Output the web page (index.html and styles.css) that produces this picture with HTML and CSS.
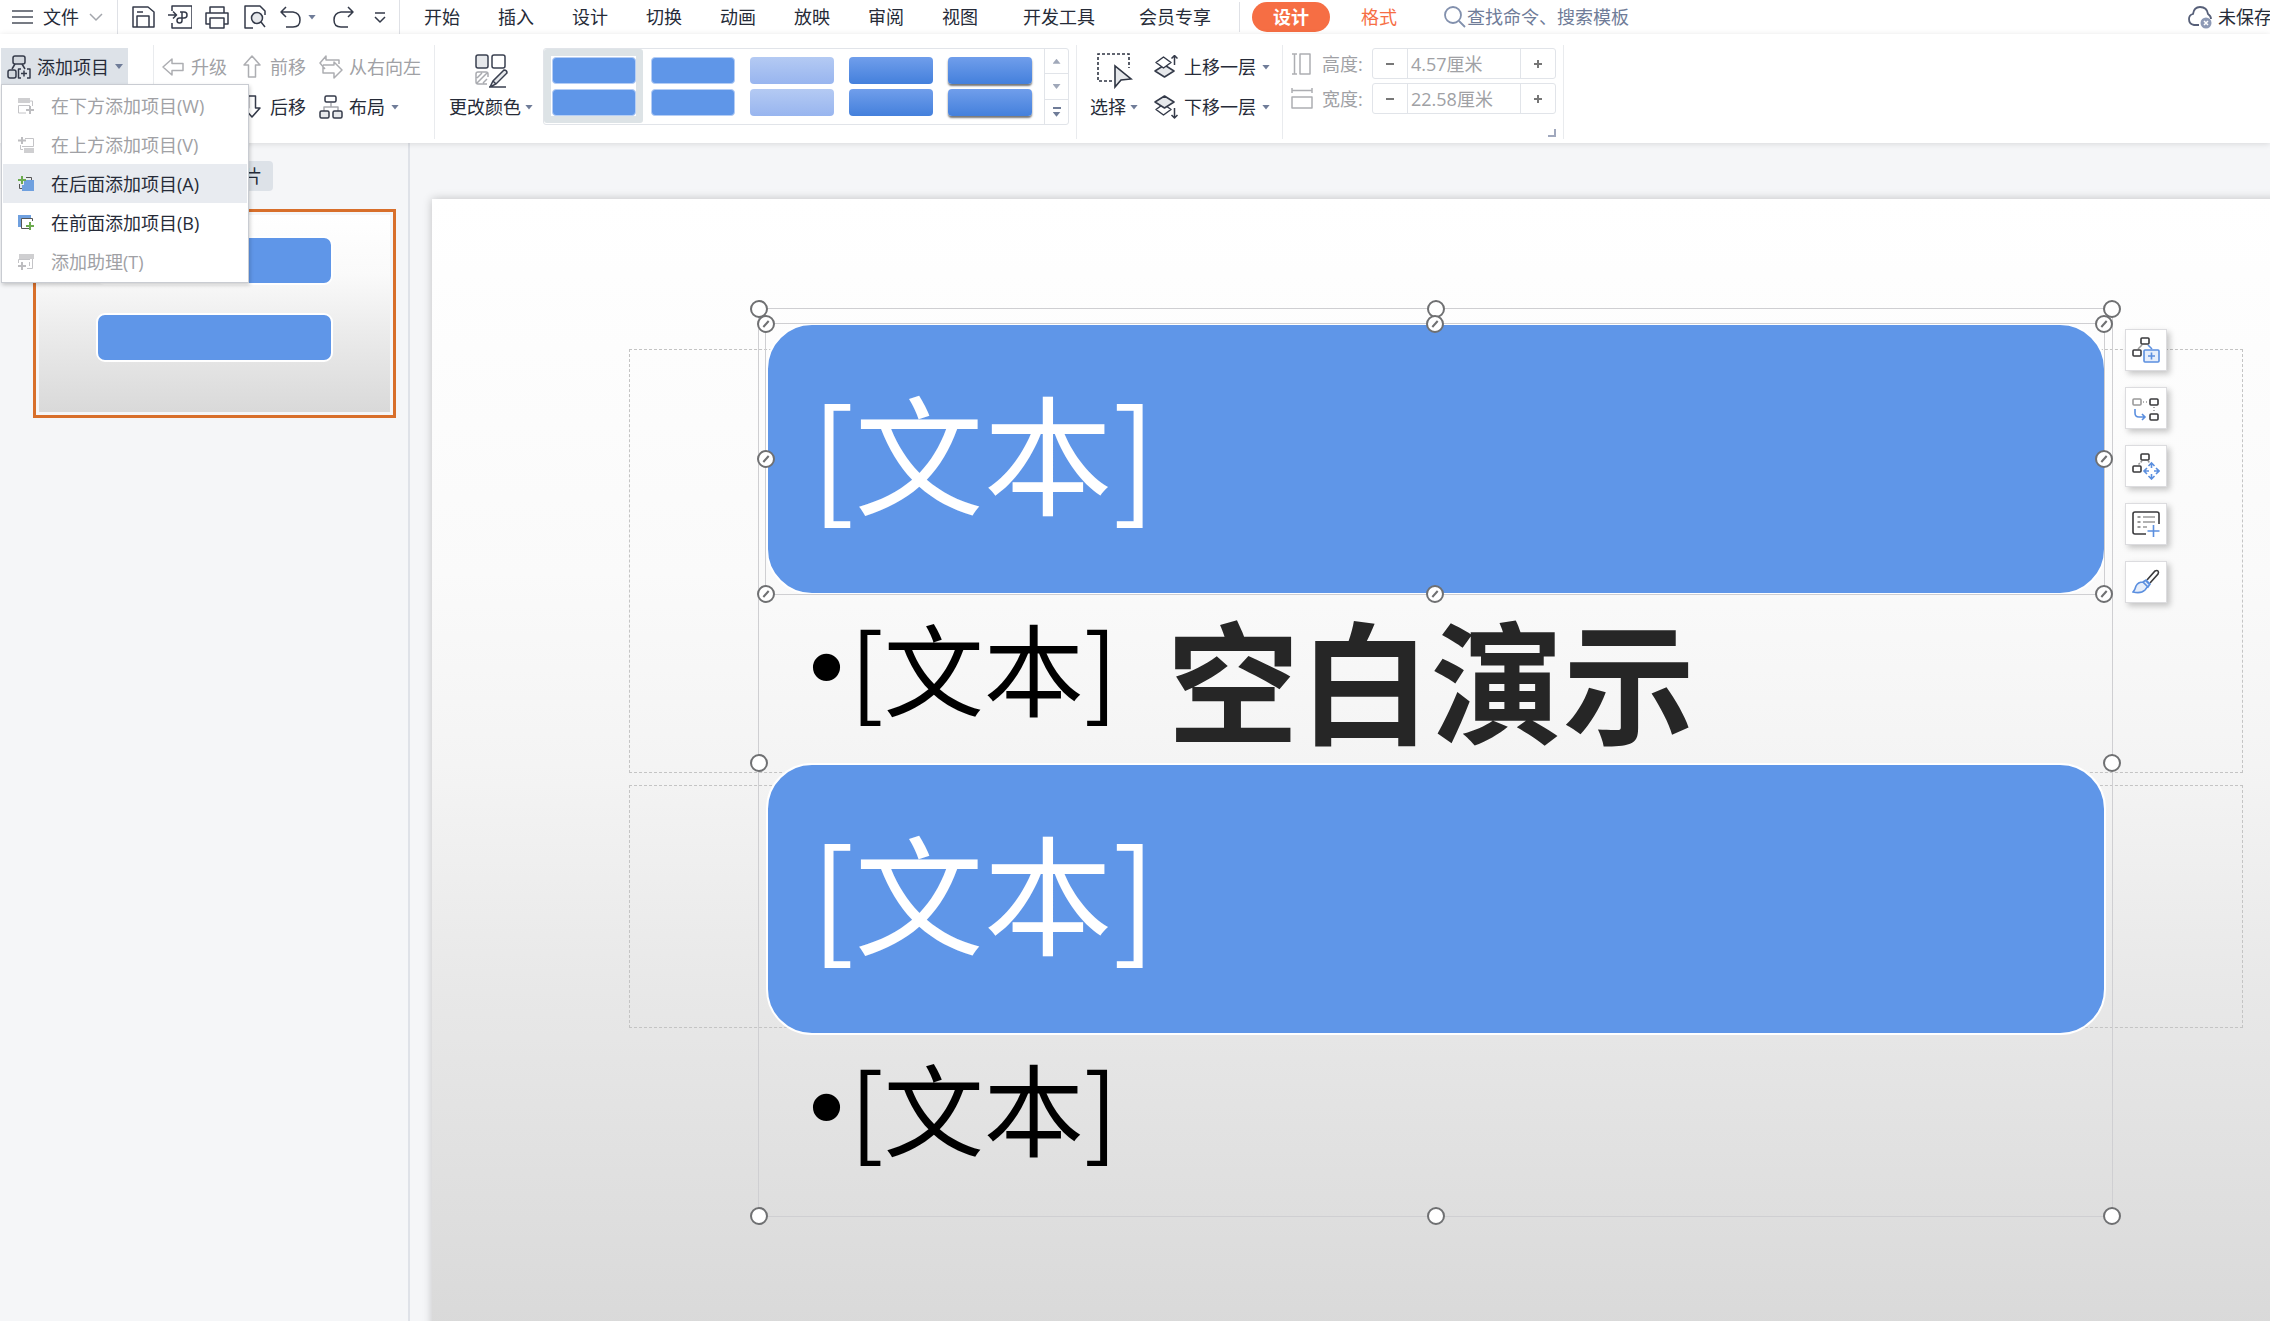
FILE: index.html
```html
<!DOCTYPE html>
<html lang="zh-CN">
<head>
<meta charset="utf-8">
<meta name="viewport" content="width=device-width, initial-scale=1">
<title>演示文稿</title>
<link rel="stylesheet" href="styles.css">
</head>
<body>
<header class="topbar">
  <button class="file-button" type="button">
    <svg class="menu-lines" width="22" height="16" viewBox="0 0 22 16"><path d="M0 2H21M0 8H21M0 14H21" stroke="#4b505c" stroke-width="1.5"/></svg>
    <span>文件</span>
    <svg width="16" height="10" viewBox="0 0 16 10"><path d="M2 2L8 8L14 2" fill="none" stroke="#a3a6ac" stroke-width="1.5"/></svg>
  </button>
  <div class="quick">
    <button type="button" aria-label="保存"><svg class="icon" viewBox="0 0 24 24"><path d="M2 2H17L23 7V22H2ZM6 22V11H18V22M6 7H12"/></svg></button>
    <button type="button" aria-label="输出为PDF"><svg class="icon" viewBox="0 0 24 24"><path d="M4 6V1H24V23H4V18M0 10H8M5 6.500L8.500 10L5 13.500M12 7H16Q19 7 19 10Q19 13 16 13H11.500Q9 13 9 15.500Q9 18 11.500 18Q14 18 14 15.500V7"/></svg></button>
    <button type="button" aria-label="打印"><svg class="icon" viewBox="0 0 24 24"><path d="M5 8V2H19V8M5 19H1V8H23V19H19M5 13H19V23H5Z"/></svg></button>
    <button type="button" aria-label="打印预览"><svg class="icon" viewBox="0 0 24 24"><path d="M11 23H3V1H18L23 6V10"/><circle cx="15" cy="13" r="5.500" fill="#e6e8eb"/><path d="M19 17L23 22"/></svg></button>
    <button type="button" aria-label="撤销"><svg class="icon" viewBox="0 0 24 24"><path d="M7 2L2 7L7 12M2 7H14Q21 8 21 15Q21 22 14 22H7"/></svg></button>
    <button class="narrow" type="button" aria-label="撤销列表"><i class="caret"></i></button>
    <button type="button" aria-label="恢复"><svg class="icon" viewBox="0 0 24 24"><path d="M17 2L22 7L17 12M22 7H10Q3 8 3 15Q3 22 10 22H17"/></svg></button>
    <button type="button" aria-label="更多"><svg class="icon" viewBox="0 0 24 24"><path d="M7 8H17M7 12L12 17L17 12"/></svg></button>
  </div>
  <nav class="tabs">
    <a href="#">开始</a><a href="#">插入</a><a href="#">设计</a><a href="#">切换</a><a href="#">动画</a><a href="#">放映</a><a href="#">审阅</a><a href="#">视图</a><a class="long first" href="#">开发工具</a><a class="long" href="#">会员专享</a>
  </nav>
  <nav class="context-tabs">
    <a class="pill" href="#">设计</a><a class="accent" href="#">格式</a>
  </nav>
  <label class="search">
    <svg width="24" height="24" viewBox="0 0 24 24"><path d="M16 16L22 22" stroke="#8290ad" stroke-width="1.800"/><circle cx="10" cy="10" r="8" fill="none" stroke="#8290ad" stroke-width="1.800"/></svg>
    <input type="text" aria-label="查找命令" placeholder="查找命令、搜索模板">
  </label>
  <button class="save-state" type="button">
    <svg width="26" height="26" viewBox="0 0 26 26"><path d="M12 21H7Q2 20 2 15Q2 11 6 10Q7 3 13 3Q20 3 21 10Q24 12 24 15" fill="none" stroke="#565f78" stroke-width="1.800"/><circle cx="19" cy="19" r="5.500" fill="#8d99b5"/><path d="M17 17L21 21M21 17L17 21" stroke="#fff" stroke-width="1.500"/></svg>
    <span>未保存</span>
  </button>
</header>

<section class="ribbon">
  <div class="group add-group">
    <button class="add-button" type="button" aria-expanded="true">
      <svg class="icon" viewBox="0 0 24 24"><rect x="6" y="1" width="12" height="8" rx="2" fill="#d3d8de"/><path d="M8 9L5 14M15 9L18 14"/><rect x="1" y="15" width="8" height="8" rx="2" fill="#d3d8de"/><path d="M14 14H11.500V23H14M20 14H23V23H20M14 18.500H20M17 15.500V21.500"/></svg>
      <span>添加项目</span><i class="caret"></i>
    </button>
    <div class="menu" role="menu">
      <button class="menu-item" type="button" disabled><svg class="mi" viewBox="0 0 16 16"><rect width="12" height="5" fill="#cfcfd1"/><path d="M12 3H14.500V8M8 15H.500V7.500H12" fill="none" stroke="#c4c4c7"/><path d="M12 8V16M8 12H16" stroke="#bdbdc0" stroke-width="2"/></svg>在下方添加项目(W)</button>
      <button class="menu-item" type="button" disabled><svg class="mi" viewBox="0 0 16 16"><rect x="6" y="11" width="10" height="5" fill="#cfcfd1"/><path d="M7 1.500H15.500V9.500H4M2.500 8V12.500H5" fill="none" stroke="#c4c4c7"/><path d="M4 0V7M0 3.500H8" stroke="#bdbdc0" stroke-width="2"/></svg>在上方添加项目(V)</button>
      <button class="menu-item hover" type="button"><svg class="mi" viewBox="0 0 16 16"><path d="M8 1.500H13.500V5M1.500 8V12.500H5" fill="none" stroke="#555"/><path d="M6 4H16V15H4V9H6Z" fill="#6fa0df"/><path d="M4 0V8M0 4H8" stroke="#6cab4f" stroke-width="2"/></svg>在后面添加项目(A)</button>
      <button class="menu-item" type="button"><svg class="mi" viewBox="0 0 16 16"><rect width="13" height="12" fill="#6fa0df"/><path d="M3.500 3.500H14.500V13.500H3.500Z" fill="#fff" stroke="#555"/><path d="M7 10H11V6H16V16H11V13H7Z" fill="#fff"/><path d="M12 7V15M8 11H16" stroke="#6cab4f" stroke-width="2"/></svg>在前面添加项目(B)</button>
      <button class="menu-item" type="button" disabled><svg class="mi" viewBox="0 0 16 16"><rect x="1" width="15" height="5" fill="#cfcfd1"/><path d="M.500 9V5.500H12M14.500 5V14.500H9M11.500 8V12" fill="none" stroke="#c4c4c7"/><path d="M4 8V16M0 12H8" stroke="#bdbdc0" stroke-width="2"/></svg>添加助理(T)</button>
    </div>
  </div>
  <div class="group move-group">
    <button class="tool" type="button" disabled><svg class="icon pale" viewBox="0 0 24 24"><path d="M2 12L11 4V8.500H22V15.500H11V20Z"/></svg>升级</button>
    <button class="tool" type="button" disabled><svg class="icon pale" viewBox="0 0 24 24"><path d="M12 1L20 10H15.500V22H8.500V10H4Z"/></svg>前移</button>
    <button class="tool" type="button" disabled><svg class="icon pale" viewBox="0 0 24 24"><path d="M6 14L1 8L7 1V5H20V9M4 10V18H15V23L23 15L15 7V10H4"/></svg>从右向左</button>
    <button class="tool" type="button" aria-label="降级"><svg class="icon" viewBox="0 0 24 24"><path d="M22 12L13 4V8.500H2V15.500H13V20Z"/></svg></button>
    <button class="tool" type="button"><svg class="icon" viewBox="0 0 24 24"><path d="M12 22L20 13H15.500V1H8.500V13H4Z"/></svg>后移</button>
    <button class="tool" type="button"><svg class="icon" viewBox="0 0 24 24"><path d="M12 8V12M5 16V12H19V16" stroke="#a9abb0"/><rect x="6" y="1" width="11" height="6" rx="1.500"/><rect x="1" y="16" width="9" height="7" rx="1.500" fill="#e6e8eb"/><rect x="14" y="16" width="9" height="7" rx="1.500" fill="#e6e8eb"/></svg>布局<i class="caret"></i></button>
  </div>
  <div class="group color-group">
    <button class="big-tool" type="button">
      <svg width="36" height="36" viewBox="0 0 36 36" fill="none" stroke="#3a4050" stroke-width="1.500"><rect x="3" y="2" width="12" height="13" rx="2" fill="#e6e8eb"/><rect x="19" y="2" width="13" height="13" rx="2"/><g stroke="#a9abb0"><path d="M15 24V21Q15 19 13 19H5Q3 19 3 21V29Q3 31 5 31H14M4 25L9 20M4 30L14 20M10 30L14 26"/></g><path d="M17 34L20 28L31 17Q34 17 34 20L23 31L17 34M20 28L23 31M16 34H33" fill="#e6e8eb"/></svg>
      <span>更改颜色<i class="caret"></i></span>
    </button>
  </div>
  <div class="gallery">
    <button class="style-item selected" type="button" aria-label="样式一"><i></i><i></i></button>
    <button class="style-item" type="button" aria-label="样式二"><i></i><i></i></button>
    <button class="style-item light" type="button" aria-label="样式三"><i></i><i></i></button>
    <button class="style-item deep" type="button" aria-label="样式四"><i></i><i></i></button>
    <button class="style-item deep raised" type="button" aria-label="样式五"><i></i><i></i></button>
    <div class="gallery-scroll">
      <button type="button" aria-label="上一行"><i class="caret up"></i></button>
      <button type="button" aria-label="下一行"><i class="caret faded"></i></button>
      <button type="button" aria-label="全部样式"><i class="more-line"></i><i class="caret"></i></button>
    </div>
  </div>
  <div class="group arrange-group">
    <button class="big-tool" type="button">
      <svg width="38" height="36" viewBox="0 0 38 36" fill="none" stroke="#2f3543" stroke-width="1.600"><path d="M17 28H3V1H34V15" stroke-dasharray="3 2"/><path d="M20 13V34L26 27L36 26Z" fill="#e6e8eb"/></svg>
      <span>选择<i class="caret"></i></span>
    </button>
    <div class="stack">
      <button class="tool" type="button"><svg class="icon" viewBox="0 0 24 24"><path d="M10.500 10L20 16L10.500 22L1 16Z" fill="#e6e8eb"/><path d="M9.500 2L17 7.500L9.500 13L2 7.500Z" fill="#fff"/><path d="M20.500 10V.500M17.500 3.500L20.500 .500L23.500 3.500"/></svg>上移一层<i class="caret"></i></button>
      <button class="tool" type="button"><svg class="icon" viewBox="0 0 24 24"><path d="M9.500 9L17 14.500L9.500 20L2 14.500Z"/><path d="M10.500 1L20 7L10.500 13L1 7Z" fill="#e6e8eb"/><path d="M20.500 13V23M17.500 20L20.500 23L23.500 20"/></svg>下移一层<i class="caret"></i></button>
    </div>
  </div>
  <div class="group size-group">
    <div class="size-row">
      <svg class="icon pale" viewBox="0 0 24 24"><path d="M2 2H7M2 22H7M4.500 2V22M10 2H20V22H10Z"/></svg>
      <label for="h">高度:</label>
      <div class="spinner"><button type="button" aria-label="减小高度"><svg width="10" height="10" viewBox="0 0 10 10"><path d="M1 5H9" stroke="#777" stroke-width="2"/></svg></button><input id="h" type="text" value="4.57厘米" disabled><button type="button" aria-label="增大高度"><svg width="10" height="10" viewBox="0 0 10 10"><path d="M1 5H9M5 1V9" stroke="#777" stroke-width="2"/></svg></button></div>
    </div>
    <div class="size-row">
      <svg class="icon pale" viewBox="0 0 24 24"><path d="M2 1V6M22 1V6M2 3.500H22M2 10H22V21H2Z"/></svg>
      <label for="w">宽度:</label>
      <div class="spinner"><button type="button" aria-label="减小宽度"><svg width="10" height="10" viewBox="0 0 10 10"><path d="M1 5H9" stroke="#777" stroke-width="2"/></svg></button><input id="w" type="text" value="22.58厘米" disabled><button type="button" aria-label="增大宽度"><svg width="10" height="10" viewBox="0 0 10 10"><path d="M1 5H9M5 1V9" stroke="#777" stroke-width="2"/></svg></button></div>
    </div>
    <button class="launcher" type="button" aria-label="大小设置"></button>
  </div>
</section>

<main class="workspace">
  <aside class="side">
    <div class="side-tabs"><a class="side-tab" href="#">片</a></div>
    <a class="thumb" href="#" aria-label="幻灯片 1"><span class="thumb-page"><i></i><i></i></span></a>
  </aside>
  <section class="canvas">
    <div class="slide">
      <div class="placeholder title-box"><h1>空白演示</h1></div>
      <div class="placeholder sub-box"></div>
      <div class="smartart">
        <div class="block">[文本]</div>
        <div class="sub"><span class="bullet">•</span>[文本]</div>
        <div class="block">[文本]</div>
        <div class="sub"><span class="bullet">•</span>[文本]</div>
      </div>
      <div class="frame outer">
        <i class="handle nw"></i><i class="handle n"></i><i class="handle ne"></i><i class="handle w"></i><i class="handle e"></i><i class="handle sw"></i><i class="handle s"></i><i class="handle se"></i>
      </div>
      <div class="frame inner">
        <i class="handle nw"></i><i class="handle n"></i><i class="handle ne"></i><i class="handle w"></i><i class="handle e"></i><i class="handle sw"></i><i class="handle s"></i><i class="handle se"></i>
      </div>
      <div class="float-tools">
        <button type="button" aria-label="添加项目"><svg viewBox="0 0 28 28"><path d="M10 9L6 13" stroke="#999"/><path d="M16 9L20 13" stroke="#5b8fdf"/><rect x="9" y="2" width="8" height="6" rx="1"/><rect x="1" y="14" width="8" height="6" rx="1"/><g stroke="#5b8fdf"><rect x="12" y="14" width="15" height="12" rx="1" fill="#e6eefb"/><path d="M19.500 16.500V23.500M16 20H23"/></g></svg></button>
        <button type="button" aria-label="更改位置"><svg viewBox="0 0 28 28"><rect x="1" y="5" width="8" height="6" rx="1" stroke="#999"/><path d="M11 8H16M22 13V19" stroke="#999" stroke-dasharray="1 2"/><rect x="18" y="5" width="8" height="6" rx="1"/><rect x="18" y="20" width="8" height="6" rx="1"/><path d="M3 15V19Q3 23 7 23H13M10 20L13 23L10 26" stroke="#5b8fdf"/></svg></button>
        <button type="button" aria-label="移动"><svg viewBox="0 0 28 28"><path d="M10 9L6 13M16 9L18 11" stroke="#999" stroke-dasharray="2 1"/><rect x="9" y="2" width="8" height="6" rx="1"/><rect x="1" y="14" width="8" height="6" rx="1"/><path d="M16.500 14L19.500 11L22.500 14M19.500 11V16M16.500 24L19.500 27L22.500 24M19.500 27V22M15 16L12 19L15 22M12 19H17M24 16L27 19L24 22M27 19H22" stroke="#5b8fdf"/></svg></button>
        <button type="button" aria-label="文本窗格"><svg viewBox="0 0 28 28"><path d="M14 24H3Q1 24 1 22V4Q1 2 3 2H25Q27 2 27 4V14"/><g stroke="#999"><path d="M11 7H23M11 12H23M11 17H15"/><path d="M7 6V8M7 11V13M7 16V18" stroke-width="3"/></g><path d="M21.500 15V27M15.500 21H27.500" stroke="#5b8fdf"/></svg></button>
        <button type="button" aria-label="样式"><svg viewBox="0 0 28 28"><path d="M15 12L23 3Q25 2 26 3Q27 4 26 6L18 15"/><path d="M11 14L14 12L18 16L16 19ZM13 12L18 17M11 14Q6 14 4 18Q3 22 1 24Q9 26 13 22L16 18" fill="#e6eefb" stroke="#5b8fdf"/></svg></button>
      </div>
    </div>
  </section>
</main>
</body>
</html>
```
FILE: styles.css
```css
* { box-sizing: border-box; }

body {
  margin: 0;
  min-height: 100vh;
  display: flex;
  flex-direction: column;
  overflow: hidden;
  background: #f5f6f8;
  color: #262b38;
  font: 400 18px/24px "Open Sans", "Noto Sans CJK SC", sans-serif;
}

button, input { font: inherit; color: inherit; }

button {
  margin: 0;
  padding: 0;
  border: 0;
  background: none;
  white-space: nowrap;
  text-align: left;
}

a { color: inherit; text-decoration: none; white-space: nowrap; }

svg { flex: none; display: block; }

.icon {
  width: 24px;
  height: 24px;
  fill: none;
  stroke: #343a49;
  stroke-width: 1.5;
  stroke-linejoin: round;
}

.icon.pale { stroke: #adaeb2; }

.caret {
  flex: none;
  display: inline-block;
  width: 8px;
  height: 5px;
  background: #6f7c98;
  clip-path: polygon(0 0, 100% 0, 50% 100%);
}

.caret.up { background: #a0a8b9; clip-path: polygon(0 100%, 100% 100%, 50% 0); }
.caret.faded { background: #a0a8b9; }

/* top bar */

.topbar {
  display: flex;
  align-items: center;
  height: 34px;
  padding-left: 12px;
  background: #fff;
}

.file-button {
  display: flex;
  align-items: center;
  gap: 9px;
  height: 34px;
  padding-right: 13px;
  border-right: 1px solid #dfe1e6;
}

.quick {
  display: flex;
  align-items: center;
  gap: 13px;
  height: 34px;
  padding: 0 7px 0 13px;
  border-right: 1px solid #dfe1e6;
}

.quick .narrow { width: 10px; margin: 0 0 0 -8px; display: flex; }

.tabs { display: flex; margin-left: 5px; }
.tabs a { padding: 0 19px; }
.tabs .long { padding: 0 22px; }
.tabs .first { margin-left: 4px; }

.context-tabs {
  display: flex;
  align-items: center;
  gap: 31px;
  height: 30px;
  margin-left: 6px;
  padding-left: 12px;
  border-left: 1px solid #dfe1e6;
}

.pill {
  padding: 3px 21px;
  border-radius: 15px;
  background: #f66e44;
  color: #fff;
  font-weight: 700;
}

.accent { color: #f66e44; }

.search { display: flex; align-items: center; margin-left: 46px; color: #6f7c98; }

.search input {
  width: 200px;
  padding: 0;
  border: 0;
  outline: 0;
  background: none;
}

.search input::placeholder { color: #6f7c98; opacity: 1; }

.save-state {
  display: flex;
  align-items: center;
  gap: 5px;
  margin-left: auto;
  margin-right: -2px;
}

/* ribbon */

.ribbon {
  position: relative;
  z-index: 2;
  display: flex;
  padding: 11px 0 4px;
  background: #fff;
  box-shadow: 0 1px 6px rgba(0, 0, 0, 0.12);
}

.group { min-height: 94px; border-right: 1px solid #e9ebee; }

.add-group { position: relative; width: 154px; padding: 3px 0 0 1px; }

.add-button {
  display: flex;
  align-items: center;
  gap: 6px;
  height: 37px;
  padding: 0 5px 0 6px;
  background: #dde2e8;
}

.menu {
  position: absolute;
  z-index: 5;
  top: 39px;
  left: 1px;
  width: 248px;
  padding: 1px;
  border: 1px solid #c9ccd2;
  background: #fff;
  box-shadow: 1px 2px 4px rgba(0, 0, 0, 0.2);
}

.menu-item {
  display: flex;
  align-items: center;
  gap: 17px;
  width: 100%;
  height: 39px;
  padding-left: 15px;
}

.menu-item.hover { background: #e8ebf0; }
.menu-item:disabled, .tool:disabled { color: #a0a1a5; }
.mi { width: 16px; height: 16px; }

.move-group {
  display: grid;
  grid-template-columns: 66px 66px auto;
  grid-auto-rows: 40px;
  column-gap: 13px;
  padding: 2px 13px 0 7px;
}

.tool { display: flex; align-items: center; gap: 6px; }

.color-group { padding-left: 14px; border: 0; }

.big-tool { padding-top: 8px; }
.big-tool svg { margin: 0 auto; }
.big-tool span { display: flex; align-items: center; gap: 4px; margin-top: 6px; }

.gallery {
  display: flex;
  height: 77px;
  margin: 3px 7px 0 10px;
  border: 1px solid #e1e4e9;
  border-radius: 3px;
}

.style-item {
  display: flex;
  flex-direction: column;
  justify-content: center;
  align-items: center;
  gap: 5px;
  width: 99px;
  height: 74px;
}

.style-item i {
  width: 84px;
  height: 27px;
  border: 1px solid #b4cdf5;
  border-radius: 4px;
  background: #5f96e8;
}

.style-item.selected { border: 7px solid #dde3e6; border-radius: 3px; }
.style-item.light i { border: 0; background: linear-gradient(#b4caf3, #98b5ef); }
.style-item.deep i { border: 0; background: linear-gradient(#709eeb, #4480dc); }
.style-item.raised i { box-shadow: 0 2px 2px #777; }

.gallery-scroll {
  display: flex;
  flex-direction: column;
  width: 24px;
  margin-left: 5px;
  border-left: 1px solid #e1e4e9;
}

.gallery-scroll button {
  flex: 1;
  display: flex;
  flex-direction: column;
  align-items: center;
  justify-content: center;
  gap: 3px;
}

.gallery-scroll button + button { border-top: 1px solid #e1e4e9; }
.more-line { width: 8px; height: 2px; background: #6f7c98; }

.arrange-group {
  display: flex;
  align-items: flex-start;
  gap: 16px;
  padding: 0 12px 0 13px;
  border-left: 1px solid #e9ebee;
}

.stack { display: grid; grid-auto-rows: 40px; padding-top: 2px; }

.size-group {
  display: flex;
  flex-direction: column;
  gap: 4px;
  padding: 3px 7px 0 7px;
}

.size-row { display: flex; align-items: center; color: #a0a1a5; }
.size-row label { width: 50px; margin-left: 8px; }

.spinner {
  display: flex;
  width: 184px;
  height: 31px;
  border: 1px solid #e1e4e9;
  border-radius: 3px;
}

.spinner button { display: flex; align-items: center; justify-content: center; width: 34px; }

.spinner input {
  flex: 1;
  min-width: 0;
  padding: 0 3px;
  border: 1px solid #e1e4e9;
  border-width: 0 1px;
  background: none;
  color: #a0a1a5;
}

.launcher {
  align-self: flex-end;
  width: 8px;
  height: 8px;
  margin-top: 11px;
  border: 2px solid #a0a8bd;
  border-width: 0 2px 2px 0;
}

/* workspace */

.workspace { flex: 1; display: flex; min-height: 0; }

.side {
  flex: none;
  width: 410px;
  padding: 18px 12px 0 33px;
  border-right: 2px solid #dfe2e8;
}

.side-tabs { display: flex; justify-content: flex-end; margin: 0 123px 18px 0; }
.side-tab { padding: 3px 11px; border-radius: 4px; background: #dde2e8; }

.thumb {
  display: block;
  padding: 3px;
  border: 3px solid #d86f2b;
}

.thumb-page {
  display: flex;
  flex-direction: column;
  align-items: center;
  gap: 28px;
  height: 197px;
  padding-top: 21px;
  background: linear-gradient(#fff, #fafafa 30%, #ebebeb 60%, #d9d9d9);
}

.thumb-page i {
  width: 237px;
  height: 49px;
  border: 2px solid #fff;
  border-radius: 9px;
  background: #5f96e8;
}

.canvas { flex: 1; min-width: 0; padding: 56px 0 0 22px; overflow: hidden; height: 1178px; }

/* the slide is a free canvas: its objects keep their own coordinates */

.slide {
  position: relative;
  width: 2012px;
  height: 1132px;
  background: linear-gradient(#fff, #fafafa 33%, #f4f4f4 50%, #e8e8e8 70%, #d9d9d9);
  box-shadow: 0 0 9px rgba(0, 0, 0, 0.22);
}

.placeholder {
  position: absolute;
  left: 197px;
  width: 1614px;
  border: 1px dashed #c4c4c4;
}

.title-box {
  top: 150px;
  height: 424px;
  display: flex;
  align-items: flex-end;
  justify-content: center;
  padding: 0 10px 20px 0;
}

.sub-box { top: 586px; height: 243px; }

h1 {
  margin: 0;
  color: #262626;
  font: 700 132px/150px "Noto Sans CJK SC", sans-serif;
}

.smartart {
  position: absolute;
  left: 334px;
  top: 124px;
  width: 1340px;
  color: #000;
  font-family: "Noto Sans CJK SC", sans-serif;
  font-weight: 400;
}

.block {
  height: 272px;
  padding-left: 43px;
  border: 2px solid #fff;
  border-radius: 46px;
  background: #5f96e8;
  color: #fff;
  font-size: 129px;
  line-height: 250px;
}

.sub {
  display: flex;
  height: 168px;
  padding-left: 43px;
  font-size: 100px;
  line-height: 142px;
}

.bullet { width: 41px; font-family: "Liberation Sans", sans-serif; }

.frame { position: absolute; border: 1px solid #cfcfd2; }
.outer { left: 326px; top: 109px; width: 1355px; height: 909px; }
.inner { left: 333px; top: 124px; width: 1340px; height: 272px; }

.handle {
  position: absolute;
  width: 18px;
  height: 18px;
  margin: -9px;
  border: 2px solid #6f7072;
  border-radius: 50%;
  background: #fff;
}

.inner .handle::after {
  content: "";
  position: absolute;
  left: 3px;
  top: 6px;
  width: 8px;
  height: 2px;
  background: #6f7072;
  transform: rotate(-48deg);
}

.nw, .w, .sw { left: 0; }
.n, .s { left: 50%; }
.ne, .e, .se { left: 100%; }
.nw, .n, .ne { top: 0; }
.w, .e { top: 50%; }
.sw, .s, .se { top: 100%; }

.float-tools {
  position: absolute;
  left: 1693px;
  top: 130px;
  display: grid;
  gap: 16px;
}

.float-tools button {
  display: flex;
  align-items: center;
  justify-content: center;
  width: 42px;
  height: 42px;
  border: 1px solid #dcdcdf;
  background: #fff;
  box-shadow: 3px 3px 6px rgba(0, 0, 0, 0.22);
}

.float-tools svg {
  width: 28px;
  height: 28px;
  fill: none;
  stroke: #3a3a3c;
  stroke-width: 1.6;
}
```
